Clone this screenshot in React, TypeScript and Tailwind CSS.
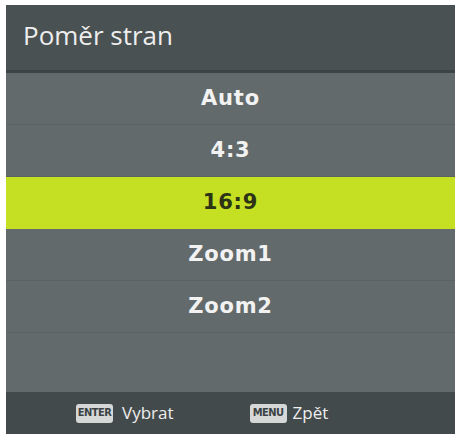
const items = ["Auto", "4:3", "16:9", "Zoom1", "Zoom2"];
const selected = "16:9";

function KeyCap({ label }: { label: string }) {
  return (
    <span
      className="inline-flex h-[19px] w-[37px] items-center justify-center rounded-[3px] bg-[#d6d8d8] text-[11px] font-bold tracking-tighter text-[#3b4243]"
      style={{ fontFamily: '"DejaVu Sans Condensed", "DejaVu Sans", sans-serif' }}
    >
      {label}
    </span>
  );
}

export default function App() {
  return (
    <div className="h-[434px] w-[457px] bg-white pl-[6px] pr-[2px] pt-[5px]">
      <div className="flex h-full flex-col">
        {/* title bar */}
        <div className="flex h-[68px] items-center border-b-[3px] border-[#3d4445] bg-[#495152] pl-[17px]">
          <span
            className="pb-[4px] text-[26px] text-[#eeeeee]"
            style={{ fontFamily: '"Open Sans", sans-serif' }}
          >
            Poměr stran
          </span>
        </div>

        {/* options */}
        <div className="flex flex-1 flex-col bg-[#636a6b]">
          {items.map((item) => (
            <div
              key={item}
              className={
                item === selected
                  ? "flex h-[52px] items-center justify-center bg-[#c5df22] text-[#2c3316]"
                  : "flex h-[52px] items-center justify-center border-b border-[#5b6263] text-[#f2f2f2]"
              }
            >
              <span
                className="text-[21px] font-bold tracking-[0.8px]"
                style={{ fontFamily: '"DejaVu Sans", Verdana, sans-serif' }}
              >
                {item}
              </span>
            </div>
          ))}
        </div>

        {/* footer */}
        <div
          className="flex h-[42px] items-center bg-[#434a4b] text-[17px] text-[#eeeeee]"
          style={{ fontFamily: '"Open Sans", sans-serif' }}
        >
          <div className="ml-[70px] flex items-center gap-[9px]">
            <KeyCap label="ENTER" />
            <span>Vybrat</span>
          </div>
          <div className="ml-[76px] flex items-center gap-[6px]">
            <KeyCap label="MENU" />
            <span>Zpět</span>
          </div>
        </div>
      </div>
    </div>
  );
}
